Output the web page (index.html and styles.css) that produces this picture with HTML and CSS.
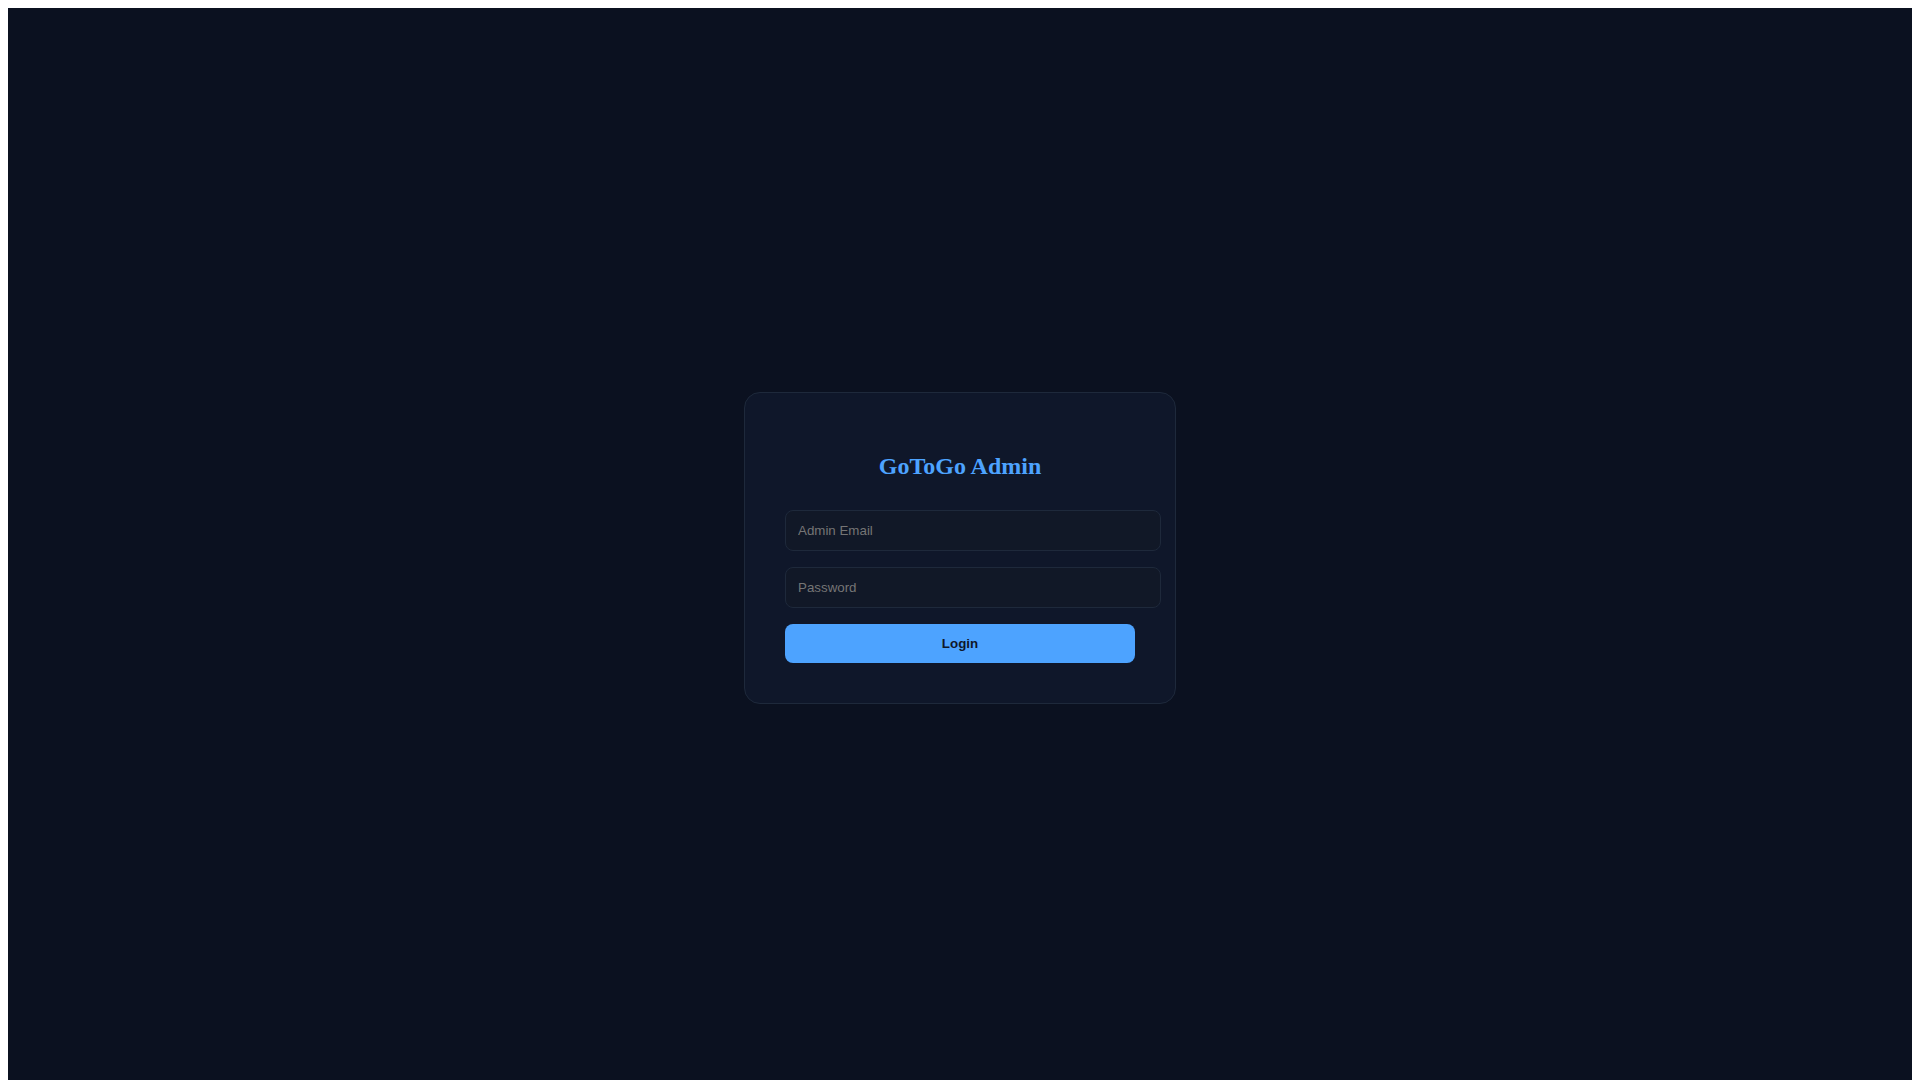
FILE: index.html
```html
<!DOCTYPE html>
<html lang="en">
<head>
  <meta charset="UTF-8">
  <title>GoToGo Admin</title>
  <link rel="stylesheet" href="styles.css">
</head>
<body>
  <div class="page">
    <div class="login-box">
      <h2>GoToGo Admin</h2>
      <input type="email" id="email" placeholder="Admin Email">
      <input type="password" id="password" placeholder="Password">
      <button onclick="login()">Login</button>
    </div>
  </div>

  <script>
    function login() {
      const email = document.getElementById("email").value.trim();
      const password = document.getElementById("password").value.trim();

      if (!email || !password) {
        alert("Please enter email and password.");
        return;
      }
    }
  </script>
</body>
</html>
```

FILE: styles.css
```css
.page {
  background: #0b1120;
  min-height: 100vh;
  display: flex;
  justify-content: center;
  align-items: center;
}

.login-box {
  background: #0f172a;
  width: 350px;
  padding: 40px;
  border: 1px solid #1e293b;
  border-radius: 16px;
  text-align: center;
}

h2 {
  font-family: "Liberation Serif", serif;
  font-size: 24px;
  color: #4da3ff;
  margin: 20px 0 30px;
}

input {
  display: block;
  width: 100%;
  padding: 12px;
  margin: 0 0 16px;
  font-family: "Liberation Sans", Arial, sans-serif;
  font-size: 13.333px;
  color: #e5e7eb;
  background: #111827;
  border: 1px solid #1e293b;
  border-radius: 8px;
  outline: none;
}

input::placeholder {
  color: #757575;
}

button {
  display: block;
  width: 100%;
  padding: 12px;
  font-family: "Liberation Sans", Arial, sans-serif;
  font-size: 13.333px;
  font-weight: bold;
  color: #0f172a;
  background: #4da3ff;
  border: none;
  border-radius: 8px;
  cursor: pointer;
}

button:hover {
  background: #3b8fe8;
}
```
